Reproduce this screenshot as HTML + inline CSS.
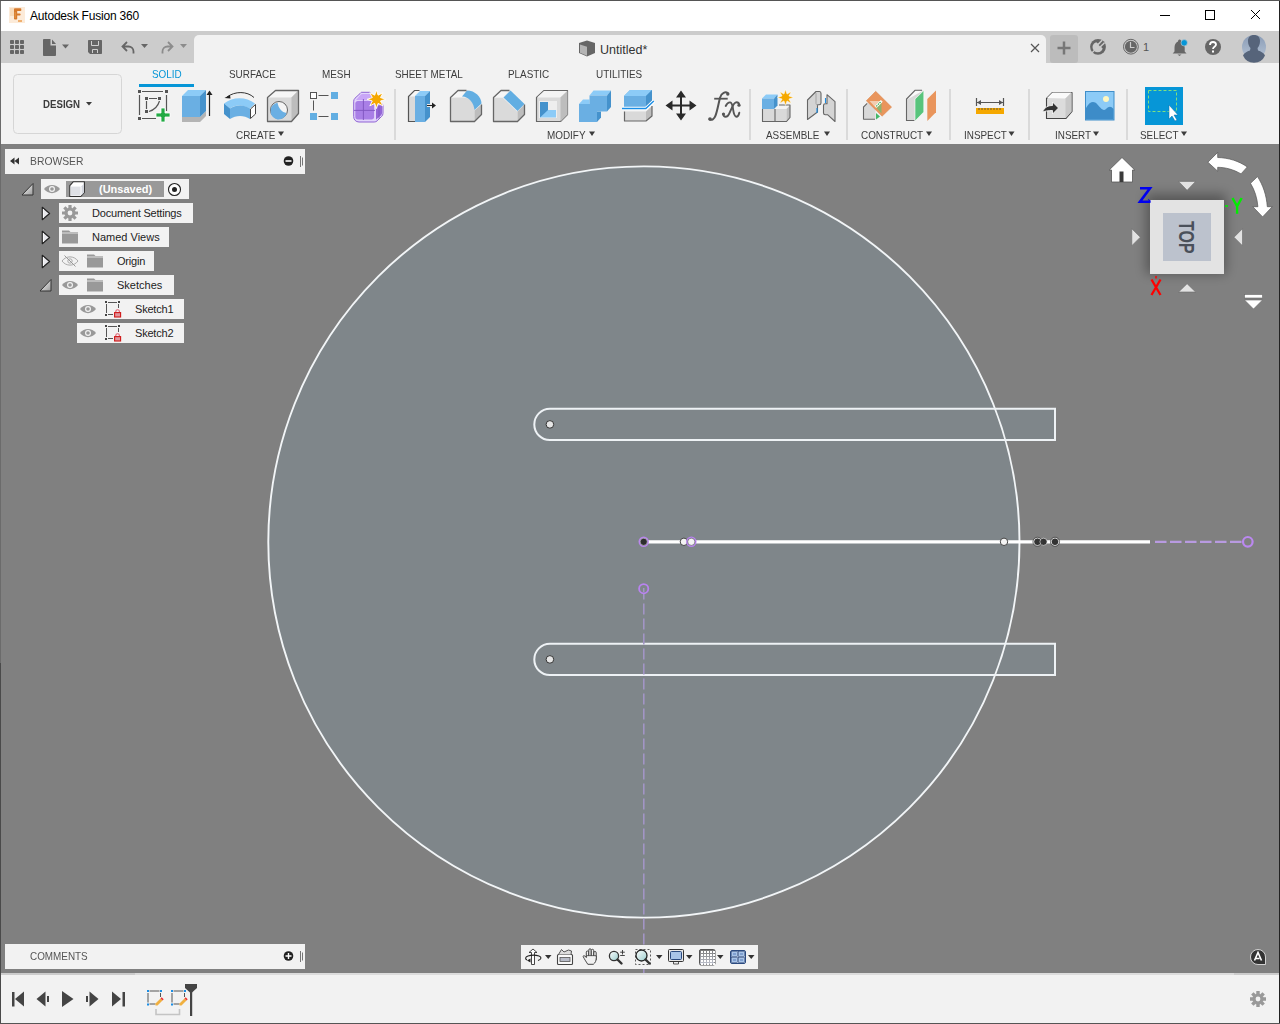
<!DOCTYPE html>
<html><head><meta charset="utf-8">
<style>
*{margin:0;padding:0;box-sizing:border-box}
html,body{width:1280px;height:1024px;overflow:hidden;background:#808080;font-family:"Liberation Sans",sans-serif}
.a{position:absolute;white-space:nowrap}
#title{left:0;top:0;width:1280px;height:31px;background:#fff}
#qat{left:0;top:31px;width:1280px;height:32px;background:#cccccc}
#doctab{left:194px;top:35px;width:852px;height:28px;background:#f2f2f2;border-radius:5px 5px 0 0}
#ribbon{left:0;top:63px;width:1280px;height:81px;background:#f2f2f2}
#vp{left:1px;top:144px;width:1278px;height:829px;background:#808080}
#tl{left:0;top:973px;width:1280px;height:51px;background:#f2f2f2;border-top:2px solid #dcdcdc}
.t{font-size:11px;color:#3c3c3c;transform-origin:0 0;transform:scaleX(.9)}
svg{position:absolute;left:0;top:0}
</style></head><body>
<div class="a" id="title"></div>
<div class="a" id="qat"></div>
<div class="a" id="doctab"></div>
<div class="a" id="ribbon"></div>
<div class="a" id="vp"></div>
<div class="a" id="tl"></div>
<div class="a" style="left:0;top:973px;width:135px;height:2px;background:#cccccc"></div>
<div class="a" style="left:1234px;top:973px;width:46px;height:2px;background:#cccccc"></div>

<!-- TEXT -->
<div class="a" style="left:30px;top:9px;font-size:12px;color:#000;letter-spacing:-0.2px">Autodesk Fusion 360</div>
<div class="a" style="left:600px;top:43px;font-size:12.5px;color:#333">Untitled*</div>
<div class="a" style="left:1143px;top:41px;font-size:11px;color:#555">1</div>

<div class="a t" style="left:152px;top:68px;color:#0696d7">SOLID</div>
<div class="a t" style="left:229px;top:68px">SURFACE</div>
<div class="a t" style="left:322px;top:68px">MESH</div>
<div class="a t" style="left:395px;top:68px">SHEET METAL</div>
<div class="a t" style="left:508px;top:68px">PLASTIC</div>
<div class="a t" style="left:596px;top:68px">UTILITIES</div>

<div class="a" style="left:43px;top:98px;font-size:11px;font-weight:bold;color:#3c3c3c;transform-origin:0 0;transform:scaleX(.88)">DESIGN</div>

<div class="a t" style="left:236px;top:129px">CREATE</div>
<div class="a t" style="left:547px;top:129px">MODIFY</div>
<div class="a t" style="left:766px;top:129px">ASSEMBLE</div>
<div class="a t" style="left:861px;top:129px">CONSTRUCT</div>
<div class="a t" style="left:964px;top:129px">INSPECT</div>
<div class="a t" style="left:1055px;top:129px">INSERT</div>
<div class="a t" style="left:1140px;top:129px">SELECT</div>

<svg width="1280" height="144" viewBox="0 0 1280 144">
 <!-- app icon -->
 <rect x="9" y="7" width="16" height="16" fill="#fcebd9"/>
 <rect x="10" y="8" width="4" height="8" fill="#f8dcbc"/>
 <path d="M14 9c0-.5.3-.8.8-.8h5.7c.5 0 .8.4.8.9v1.2c0 .5-.3.8-.8.8h-3.3v2.3h2.6c.5 0 .8.3.8.8v.6c0 .5-.3.8-.8.8h-2.6v3.2c0 .5-.4.8-.9.8h-1.4c-.5 0-.9-.3-.9-.8z" fill="#d67a2c"/>
 <path d="M15.2 12v6" stroke="#f0b060" stroke-width=".8" opacity=".7"/>
 <rect x="18" y="20" width="4" height="2" fill="#f0b070"/>
 <!-- window controls -->
 <path d="M1160 15.5h10" stroke="#000" stroke-width="1"/>
 <rect x="1205.5" y="10.5" width="9" height="9" fill="none" stroke="#000"/>
 <path d="M1251 10l9 9M1260 10l-9 9" stroke="#000" stroke-width="1"/>
 <!-- QAT -->
 <g fill="#666">
  <rect x="10" y="40" width="4" height="4" rx=".8"/><rect x="15" y="40" width="4" height="4" rx=".8"/><rect x="20" y="40" width="4" height="4" rx=".8"/>
  <rect x="10" y="45" width="4" height="4" rx=".8"/><rect x="15" y="45" width="4" height="4" rx=".8"/><rect x="20" y="45" width="4" height="4" rx=".8"/>
  <rect x="10" y="50" width="4" height="4" rx=".8"/><rect x="15" y="50" width="4" height="4" rx=".8"/><rect x="20" y="50" width="4" height="4" rx=".8"/>
  <path d="M43 40c0-.5.4-1 1-1h6.5v6.5h5.5v9.5c0 .5-.4 1-1 1h-11c-.6 0-1-.5-1-1z"/><path d="M52 39.5l4 4.5h-4z"/>
  <path d="M62 44.5h7l-3.5 4z"/>
  <path d="M89 40h12c.6 0 1 .4 1 1v12c0 .6-.4 1-1 1h-11l-2-2v-11c0-.6.4-1 1-1z"/>
  <path d="M141 44h7l-3.5 4z"/>
 </g>
 <path d="M91.5 41v4.5h7v-4.5M92.5 53v-3.5h5v3.5" stroke="#d0d0d0" stroke-width="1" fill="none"/>
 <path d="M127 42l-4.5 4.5 4.5 4.5M122.5 46.5h6a5 5 0 0 1 5 5v2" stroke="#666" stroke-width="1.8" fill="none"/>
 <path d="M168 42l4.5 4.5-4.5 4.5M172.5 46.5h-5a5 5 0 0 0-5 5v2" stroke="#8c8c8c" stroke-width="1.8" fill="none"/>
 <path d="M180 44h7l-3.5 4z" fill="#8c8c8c"/>
 <!-- doc tab icon -->
 <path d="M579 43l8-2.5 8 2.5v10l-8 3.5-8-3.5z" fill="#666"/>
 <path d="M580 44.5l7 2.2v9l-7-3z" fill="#b4b4b4"/>
 <path d="M1031 44l8 8M1039 44l-8 8" stroke="#555" stroke-width="1.2"/>
 <!-- right tab bar -->
 <rect x="1050" y="35" width="28" height="28" rx="3" fill="#bcbcbc"/>
 <path d="M1064 41.5v13M1057.5 48h13" stroke="#777" stroke-width="2.5"/>
</svg>


<svg width="1280" height="144" viewBox="0 0 1280 144">
 <!-- design box -->
 <rect x="13.5" y="74.5" width="108" height="59" rx="4" fill="none" stroke="#d6d6d6"/>
 <path d="M86 102h6l-3 3.5z" fill="#3c3c3c"/>
 <!-- solid underline -->
 <rect x="139" y="84" width="55" height="3" fill="#0696d7"/>
 <!-- dropdown arrows for group labels -->
 <g fill="#3c3c3c">
  <path d="M278 131.6h6l-3 4.4z"/>
  <path d="M589 131.6h6l-3 4.4z"/>
  <path d="M824 131.6h6l-3 4.4z"/>
  <path d="M926 131.6h6l-3 4.4z"/>
  <path d="M1008.5 131.6h6l-3 4.4z"/>
  <path d="M1093 131.6h6l-3 4.4z"/>
  <path d="M1181 131.6h6l-3 4.4z"/>
 </g>
 <!-- separators -->
 <g fill="#dadada">
  <rect x="394" y="89" width="2" height="51"/>
  <rect x="749" y="89" width="2" height="51"/>
  <rect x="846" y="89" width="2" height="51"/>
  <rect x="949" y="89" width="2" height="51"/>
  <rect x="1028" y="89" width="2" height="51"/>
  <rect x="1126" y="89" width="2" height="51"/>
 </g>

 <!-- CREATE: sketch -->
 <g stroke="#555" stroke-width="1.2" fill="none">
  <path d="M142 91.5h21M166.5 95v16M139.5 95v20M142 118.5h14"/>
  <path d="M149 98.5h8M146.5 101v8M149 111.5c5-1.5 9-5.5 10.5-10.5"/>
 </g>
 <g fill="#555">
  <rect x="138" y="90" width="3" height="3"/><rect x="165" y="90" width="3" height="3"/><rect x="138" y="117" width="3" height="3"/>
  <rect x="145" y="97" width="3" height="3"/><rect x="158" y="97" width="3" height="3"/><rect x="145" y="110" width="3" height="3"/>
 </g>
 <path d="M161 108h4v5h5v4h-5v5h-4v-5h-5v-4h5z" fill="#22aa44" stroke="#fff" stroke-width=".8"/>
 <!-- extrude -->
 <path d="M182 117h18l6-6v5l-6 6h-18z" fill="#b4b4b4"/>
 <path d="M182 96l6-6h18l-6 6z" fill="#8ccbf7"/>
 <rect x="182" y="96" width="18" height="21" fill="#6aafe3"/>
 <path d="M200 96l6-6v21l-6 6z" fill="#4592cc"/>
 <path d="M209.5 116v-22" stroke="#222" stroke-width="1.2"/><path d="M206.5 95l3-4.5 3 4.5z" fill="#222"/>
 <!-- revolve -->
 <path d="M227 97c8-6 20-6 27 0.5" stroke="#333" stroke-width="1" fill="none"/>
 <path d="M224.5 98l5.5-3 .5 3.5z" fill="#222"/>
 <path d="M224 103.5c9-7 22-7 31 0l-5 5c-7-4-15-4-20 0l-6-5z" fill="#8ccbf7"/>
 <path d="M230 108.5c6-4 14-4 20 0v10.5c-6-4-14-4-20 0z" fill="#6aafe3"/>
 <path d="M224 103.5l6 5v10.5l-6-5z" fill="#4592cc"/>
 <path d="M250.5 109l5-4.5v9.5l-5 4.5z" fill="#fff" stroke="#444" stroke-width="1"/>
 <!-- hole -->
 <path d="M267.5 97.5l8-7h23v23l-7 8h-24z" fill="#d9d9d9"/>
 <path d="M268 97.5l7.5-7h22.5l-6.5 7z" fill="#f6f6f6"/>
 <path d="M291.5 97.5l7-7v23l-7 8z" fill="#bdbdbd"/>
 <path d="M267.5 121.5v-24l8-7h23v23l-7 8z" fill="none" stroke="#666" stroke-width="1.3" stroke-linejoin="round"/>
 <circle cx="279" cy="110" r="8.5" fill="#f4f4f4" stroke="#666" stroke-width="1"/>
 <path d="M277.5 102.8c-4 1-6.8 4-6.8 7.7a8 8 0 0 0 15.8 2.5c-4.5-.5-8-4.5-9-10.2z" fill="#6aafe3"/>
 <!-- pattern -->
 <rect x="310.5" y="92.5" width="6" height="6" fill="#fff" stroke="#555"/>
 <rect x="331" y="92" width="7" height="7" fill="#62aee2"/>
 <rect x="310" y="113" width="7" height="7" fill="#62aee2"/>
 <rect x="331" y="113" width="7" height="7" fill="#62aee2"/>
 <path d="M318.5 95.5h10M313.5 100.5v10M318.5 116.5h10" stroke="#555" stroke-width="1"/>
 <!-- form -->
 <path d="M361.5 92.3h8.5l2.5 3 10.5 9.5v8.5c0 1.2-.5 2.2-1.3 3l-4.5 4.5c-.8.8-1.8 1.2-3 1.2h-15.2c-3 0-5.3-2.3-5.3-5.3v-15.5c0-1.2.5-2.2 1.3-3l5.2-4.8c.4-.4.8-1 1.3-1.1z" fill="#e2d4fb" stroke="#8f63d4" stroke-width="1"/>
 <path d="M356 100l4.8-5.5c.4-.4.9-.6 1.4-.6h8l3 5.5v1z" fill="#c9a6f7"/>
 <path d="M355.3 103.5c0-1.5 1.2-2.5 2.5-2.5h13.8c1.5 0 2.5 1 2.5 2.5v13.5c0 1.5-1 2.5-2.5 2.5h-13.8c-1.5 0-2.5-1-2.5-2.5z" fill="#a97fe6"/>
 <path d="M376 106l6-1v8c0 1-.4 1.6-1 2.2l-5 4.5z" fill="#9466d6"/>
 <path d="M363.4 99v21M354 110.4h21M379 104.5v14" stroke="#7e56c0" stroke-width=".9"/>
 <path d="M376.4 90l1.7 5.2 4.9-2.5-2.5 4.9 5.2 1.7-5.2 1.7 2.5 4.9-4.9-2.5-1.7 5.2-1.7-5.2-4.9 2.5 2.5-4.9-5.2-1.7 5.2-1.7-2.5-4.9 4.9 2.5z" fill="#f5a800" stroke="#fff" stroke-width=".9" stroke-linejoin="round"/>

 <!-- MODIFY: press pull -->
 <path d="M409 96.5l5.5-6h6l-5.5 6z" fill="#f6f6f6"/><path d="M409 96.5h6v25h-6z" fill="#dadada"/><path d="M415 121.5h-6.5v-25l6-6h5" fill="none" stroke="#555" stroke-width="1.2"/>
 <path d="M415 96l5-5h10l-5 5z" fill="#8ccbf7"/>
 <rect x="415" y="96" width="10" height="26" fill="#6aafe3"/>
 <path d="M425 96l5-5v26l-5 5z" fill="#4592cc"/>
 <path d="M427 105.5h7" stroke="#fff" stroke-width="3"/>
 <path d="M427 105.5h6" stroke="#222" stroke-width="1.2"/><path d="M432 102.5l4 3-4 3z" fill="#222"/>
 <!-- fillet -->
 <path d="M451 97.5h12c7 0 11.5 5 11.5 12v12h-24z" fill="#dadada"/>
 <path d="M451 97.5l7-7h8.5l-4.5 6.5z" fill="#f6f6f6"/>
 <path d="M474.5 121.5l7-7v-10l-7 6z" fill="#bdbdbd"/>
 <path d="M462 96.5l5-6c8 0 14.5 6.5 14.5 13l-7 6.5c-.5-7-5.5-13.5-12.5-13.5z" fill="#62aee2"/>
 <path d="M466.5 90.5h-8.5l-7.5 7v24h24l7-7v-10" fill="none" stroke="#666" stroke-width="1.3" stroke-linejoin="round"/>
 <!-- chamfer -->
 <path d="M494 97.5h8.5l15 14.5v9.5h-24z" fill="#dadada"/>
 <path d="M494 97.5l7-7h7.5l-6 7z" fill="#f6f6f6"/>
 <path d="M517.5 121.5l7-7v-10l-7 7z" fill="#bdbdbd"/>
 <path d="M503.5 97.5l7-7 14 13.5-7 7z" fill="#62aee2"/>
 <path d="M509.5 90.5h-8.5l-7.5 7v24h24l7-7v-10" fill="none" stroke="#666" stroke-width="1.3" stroke-linejoin="round"/>
 <!-- shell -->
 <path d="M536.5 121.5v-24l7.5-7h23.5v24l-7 7z" fill="#dadada" stroke="#666" stroke-width="1.2" stroke-linejoin="round"/>
 <path d="M537 97.5l7-6.5h23l-7 6.5z" fill="#f4f4f4"/>
 <path d="M560.5 97.5l7-6.5v23.5l-7 7z" fill="#bdbdbd"/>
 <rect x="539" y="101" width="18" height="17" fill="#eeeeee"/>
 <path d="M540 102h8v8h8v7.5h-16z" fill="#8ccbf7"/>
 <path d="M540 102h8v8l-8 7.5z" fill="#4592cc"/>
 <!-- combine -->
 <path d="M579 104l4-4.5h6.5v4.5z" fill="#8ccbf7"/>
 <rect x="579" y="104" width="18" height="18" fill="#6aafe3"/>
 <path d="M597 111.5h4v6l-4 4.5z" fill="#4592cc"/>
 <path d="M589.5 95.5l4-5h17.5l-4 5z" fill="#8ccbf7"/>
 <rect x="589.5" y="95.5" width="17.5" height="16" fill="#6aafe3"/>
 <path d="M607 95.5l4-5v16.5l-4 4.5z" fill="#4592cc"/>
 <!-- split -->
 <path d="M624 96l6-6h22v14l-6 6h-22z" fill="#6aafe3"/>
 <path d="M624 96l6-6h22l-6 6z" fill="#8ccbf7"/><path d="M646 96l6-6v14l-6 6z" fill="#4592cc"/>
 <path d="M622 108.5h24l8-7.5" stroke="#fff" stroke-width="3.5" fill="none"/>
 <path d="M622 108.5h23.8l8-7.5" stroke="#1a8ee6" stroke-width="1.4" fill="none"/>
 <path d="M624.5 111.5h21.5v9.5h-21.5z" fill="#d9d9d9"/>
 <path d="M646 111.5l6-5.5v10l-6 5z" fill="#bdbdbd"/>
 <path d="M624.5 111.5v9.5h21.5l6-5v-10" fill="none" stroke="#666" stroke-width="1.2" stroke-linejoin="round"/>
 <!-- move -->
 <path d="M681 95v21M671 105.5h21" stroke="#2a2a2a" stroke-width="2"/>
 <path d="M681 90.5l5 7h-10zM681 120.5l5-7h-10zM665.5 105.5l7-5v10zM696.5 105.5l-7-5v10z" fill="#2a2a2a"/>
 <!-- fx -->
 <g fill="none" stroke="#555" stroke-linecap="round">
  <path d="M728 93.2c-2.5-1.8-6.5-.8-8 4.5-1.5 6-2.5 12.5-4.5 18-1.3 3.5-3.8 4.8-6 3.6" stroke-width="2"/>
  <path d="M714.2 98.7h13.5" stroke-width="1.8" stroke-linecap="butt"/>
  <path d="M725.7 106c1.3-2.5 3-3.8 4.5-3.6 2 .3 2.3 3 2.8 6.5.6 4 1.2 7.8 3.3 7.8 1.5 0 2.5-1.5 3-4" stroke-width="1.9"/>
  <path d="M739.2 104.8c-.3-1.7-1.3-2.5-2.6-2.5-2 0-3.5 2.5-5 6l-2.5 5.5c-1 2.2-2.4 3-3.5 3-1.3 0-2.2-1-2.3-2.5" stroke-width="1.9"/>
 </g>
 <circle cx="727.8" cy="94" r="1.7" fill="#555"/><circle cx="710" cy="119" r="1.8" fill="#555"/>
 <circle cx="739" cy="105.2" r="1.6" fill="#555"/><circle cx="723.5" cy="114" r="1.6" fill="#555"/>

 <!-- ASSEMBLE: new component -->
 <path d="M775 109l4-4h11l-4 4z" fill="#f4f4f4"/>
 <rect x="762.5" y="109" width="24" height="12.5" fill="#d9d9d9"/>
 <path d="M786.5 109l3.5-4v12.5l-3.5 4z" fill="#c0c0c0"/>
 <path d="M762.5 109v12.5h24l3.5-4v-12.5h-11M775 109v12.5" fill="none" stroke="#666" stroke-width="1.1" stroke-linejoin="round"/>
 <path d="M762 98.5l4-4h11.5l-3.5 4z" fill="#8ccbf7"/>
 <rect x="762" y="98.5" width="12" height="10.5" fill="#6aafe3"/>
 <path d="M774 98.5l3.5-4v11l-3.5 3.5z" fill="#4592cc"/>
 <path d="M785.5 89.5l1.5 4.6 4.2-2.3-2.3 4.2 4.6 1.5-4.6 1.5 2.3 4.2-4.2-2.3-1.5 4.6-1.5-4.6-4.2 2.3 2.3-4.2-4.6-1.5 4.6-1.5-2.3-4.2 4.2 2.3z" fill="#f5a800" stroke="#fff" stroke-width=".5"/>
 <!-- joint -->
 <path d="M807.5 119.5v-19.5l8.5-8.5h3.5c1 0 1.5 1 1.5 2v9.5c0 1-.8 1.7-1.8 1.7h-1.7v7.3z" fill="#d4d4d4" stroke="#666" stroke-width="1.1" stroke-linejoin="round"/>
 <path d="M816 93v10.5c0 1 .8 1.5 1.7 1.5" stroke="#999" stroke-width=".8" fill="none"/>
 <path d="M823.5 113v-7.5c0-1 .8-1.8 1.8-1.8h1.7v-9l8 7v19.8l-7.5-6.8h-2.2c-1 0-1.8-.8-1.8-1.7z" fill="#d4d4d4" stroke="#666" stroke-width="1.1" stroke-linejoin="round"/>
 <path d="M817 108v5M825.5 98v5" stroke="#1a8ee6" stroke-width="1.1"/>

 <!-- CONSTRUCT: offset plane -->
 <path d="M864 107l3.5-3.5h8v15.5h-11.5z" fill="#d9d9d9"/>
 <path d="M863.5 119.5v-12.5l3.7-3.7M863.5 119.3h11.5" fill="none" stroke="#666" stroke-width="1.1"/>
 <path d="M876 119.5v-6.5l4 3.5z" fill="#44b86a"/>
 <path d="M866.3 100.8l9.4-9.5 15.9 15.8-9.5 9.1z" fill="#e9955c" stroke="#d8844a" stroke-width=".5"/>
 <path d="M869.5 101h11.5l-5 7z" fill="#f2cdb2"/>
 <path d="M876.5 108l5-5v10.5z" fill="#8db46e"/>
 <path d="M875.8 106.8l6-6" stroke="#fff" stroke-width="2.6"/><path d="M876.3 106.3l5-5" stroke="#22aa44" stroke-width="1.2" stroke-dasharray="1.4 .9"/>
 <!-- plane at angle -->
 <path d="M907 99l8-8.5h8v21.5l-8 9h-8z" fill="#d9d9d9"/>
 <path d="M907.3 99.5l8-8.5h7" fill="#fafafa"/>
 <path d="M914.5 120.5h-8v-21.5l8.5-8.7h7" fill="none" stroke="#666" stroke-width="1.1"/>
 <path d="M915 99l8.8-8.5v21.5l-8.8 9z" fill="#58c47c" stroke="#fff" stroke-width=".6"/>
 <path d="M927.3 99l8.7-8.5v21.8l-8.7 8.7z" fill="#e9955c"/>

 <!-- INSPECT -->
 <path d="M977 102.5h26" stroke="#555" stroke-width="1"/>
 <path d="M976.5 98v8M1003.5 98v8" stroke="#555" stroke-width="1.2"/>
 <path d="M977 102.5l4-2.5v5zM1003 102.5l-4-2.5v5z" fill="#555"/>
 <rect x="976" y="108" width="28" height="6" fill="#f5a800"/>
 <path d="M979 108v2M982 108v2M985 108v2M988 108v2M991 108v2M994 108v2M997 108v2M1000 108v2" stroke="#444" stroke-width=".8"/>

 <!-- INSERT: derive -->
 <path d="M1046.5 118.5v-20l6-6h19.5v19l-6 7z" fill="#dcdcdc" stroke="#444" stroke-width="1.1" stroke-linejoin="round"/>
 <path d="M1047 98l5.5-5.5h19l-6 6z" fill="#fafafa"/>
 <path d="M1065.5 98.5l6-6v19l-6 6.5z" fill="#c8c8c8"/>
 <path d="M1042.5 112c2-5 6-6.5 10-6.5v-3.5l6 6-6 6v-3.5c-4 0-7.5 .5-10 1.5z" fill="#333" stroke="#fff" stroke-width=".8"/>
 <!-- insert image -->
 <rect x="1085.5" y="91.5" width="28.5" height="28.5" fill="#8ccbf7" stroke="#3f8ec9" stroke-width="1"/>
 <path d="M1086 108c4-7 8-7 11-4s6 8 9 5 5-3 7.5 0v10.5h-27.5z" fill="#3d8cc8"/>
 <circle cx="1106" cy="99" r="3" fill="#fff7c0"/>

 <!-- SELECT -->
 <rect x="1145" y="87" width="38" height="38" fill="#0696d7"/>
 <rect x="1148.5" y="90.5" width="28" height="21" fill="none" stroke="#7fe07f" stroke-width="1" stroke-dasharray="3 2"/>
 <path d="M1169 105v14l3-3 3 5 2-1-3-5h4z" fill="#fff" stroke="#0b6fa8" stroke-width=".5"/>
</svg>


<!-- VIEWPORT SVG -->
<svg width="1280" height="1024" viewBox="0 0 1280 1024" style="top:0;left:0">
 <defs>
  <clipPath id="vpc"><rect x="1" y="144" width="1278" height="829"/></clipPath>
  <filter id="blur6" x="-50%" y="-50%" width="200%" height="200%"><feGaussianBlur stdDeviation="6"/></filter>
 </defs>
 <g clip-path="url(#vpc)">
  <circle cx="643.9" cy="542" r="375.6" fill="#7f868a"/>
  <path d="M549.9 408.8H1055V440H549.9A15.6 15.6 0 0 1 549.9 408.8Z" fill="#7f868a"/>
  <path d="M549.9 643.8H1055V675H549.9A15.6 15.6 0 0 1 549.9 643.8Z" fill="#7f868a"/>
  <circle cx="643.9" cy="542" r="375.6" fill="none" stroke="#f2f5f7" stroke-width="1.9"/>
  <path d="M549.9 408.8H1055V440H549.9A15.6 15.6 0 0 1 549.9 408.8Z" fill="none" stroke="#eef2f5" stroke-width="2"/>
  <path d="M549.9 643.8H1055V675H549.9A15.6 15.6 0 0 1 549.9 643.8Z" fill="none" stroke="#eef2f5" stroke-width="2"/>
  <circle cx="549.9" cy="424.4" r="3.8" fill="#e6e6e6" stroke="#333" stroke-width="1"/>
  <circle cx="549.9" cy="659.4" r="3.8" fill="#e6e6e6" stroke="#333" stroke-width="1"/>
  <!-- vertical dashed -->
  <path d="M643.8 593V973" stroke="#a596c8" stroke-width="1.5" stroke-dasharray="11 4" stroke-dashoffset="-10.5"/>
  <!-- horizontal line -->
  <path d="M643.7 541.8H1150" stroke="#fff" stroke-width="3.2"/>
  <path d="M1155 541.8H1242" stroke="#b89ae0" stroke-width="2.2" stroke-dasharray="11.5 3.5"/>
  <circle cx="1247.8" cy="541.8" r="4.8" fill="none" stroke="#bb88f0" stroke-width="2.2"/>
  <!-- points -->
  <circle cx="643.7" cy="541.8" r="5.2" fill="#b983f0"/>
  <circle cx="643.7" cy="541.8" r="3.6" fill="#2e2e2e" stroke="#bbb" stroke-width=".7"/>
  <circle cx="683.9" cy="541.8" r="3.7" fill="#f4f4f4" stroke="#444" stroke-width="1"/>
  <circle cx="691.3" cy="541.8" r="5.2" fill="#b983f0"/>
  <circle cx="691.3" cy="541.8" r="3.6" fill="#f4f4f4" stroke="#555" stroke-width=".6"/>
  <circle cx="643.7" cy="588.7" r="4.6" fill="none" stroke="#b983f0" stroke-width="1.8"/>
  <path d="M643.7 588v4" stroke="#a596c8" stroke-width="1.5"/>
  <circle cx="1004" cy="541.8" r="3.7" fill="#f4f4f4" stroke="#444" stroke-width="1"/>
  <circle cx="1037.5" cy="541.8" r="3.8" fill="#333" stroke="#f4f4f4" stroke-width=".8"/>
  <circle cx="1043.5" cy="541.8" r="3.6" fill="#333" stroke="#eee" stroke-width=".6"/>
  <circle cx="1055" cy="541.8" r="3.8" fill="#333" stroke="#f4f4f4" stroke-width=".8"/>
  <circle cx="1037.5" cy="541.8" r="4.6" fill="none" stroke="#444" stroke-width=".7"/>
  <circle cx="1055" cy="541.8" r="4.6" fill="none" stroke="#444" stroke-width=".7"/>
 </g>

 <!-- NAV CUBE -->
 <rect x="1146" y="194" width="80" height="80" fill="#000" opacity=".32" filter="url(#blur6)"/>
 <rect x="1150" y="200" width="74" height="74" fill="#e3e3e3"/>
 <rect x="1163" y="213" width="48" height="48" fill="#bcc2cd"/>
 <text x="0" y="0" transform="translate(1179.3 237.3) rotate(90) scale(0.76 1.05)" text-anchor="middle" font-family="Liberation Sans" font-weight="bold" font-size="21" fill="#4a505a">TOP</text>
 <!-- axes -->
 <path d="M1140 188.2h10l-10 13.6h10.5" fill="none" stroke="#0000f0" stroke-width="2.6" stroke-linejoin="miter"/>
 <path d="M1148 199.5l2.5 1.5" stroke="#0000f0" stroke-width="1"/>
 <path d="M1232.5 198l4.6 8.3 4.6-8.3M1237.1 206.3v7.5" fill="none" stroke="#00ee00" stroke-width="2.4"/>
 <path d="M1225 206h3" stroke="#00ee00" stroke-width="1.6"/>
 <path d="M1151.5 279.5l9 15.5M1160.5 279.5l-9 15.5" fill="none" stroke="#ff0000" stroke-width="2.3"/>
 <path d="M1156 276v2.5" stroke="#f00" stroke-width="1.5"/>
 <!-- arrows around cube -->
 <g fill="#e2e2e2" stroke="#6a6a6a" stroke-width=".6">
  <path d="M1178.6 181.4h17l-8.5 8.9z"/>
  <path d="M1178.6 292h17l-8.5-8.3z"/>
  <path d="M1131.8 228.7v17l8.5-8.5z"/>
  <path d="M1242.5 228.7v17l-8.5-8.5z"/>
 </g>
 <!-- home -->
 <path d="M1122 157.5l-12.8 12.5h2.3v12h21v-12h2.3z" fill="#fff" stroke="#555" stroke-width=".8" stroke-linejoin="round"/>
 <rect x="1119.5" y="171.5" width="4" height="10.5" fill="#3a3a3a"/>
 <!-- rotate arrows -->
 <path d="M1207.9 162.2l9.8-9.8v5.1c11 .3 21 3.5 29.6 9.4l-6.3 7c-7.2-4.2-15-6.5-23.3-6.6v3.9z" fill="#fff" stroke="#555" stroke-width=".7" stroke-linejoin="round"/>
 <path d="M1250.5 183.3l7-6.7c5.5 8.5 9 18.5 9.8 30.1h5l-9.7 10.2-9.8-10.2h5.1c-.7-8.7-3.2-16.5-7.4-23.4z" fill="#fff" stroke="#555" stroke-width=".7" stroke-linejoin="round"/>
 <!-- view menu icon -->
 <rect x="1244.5" y="294.5" width="18" height="3.5" fill="#fff" stroke="#666" stroke-width=".6"/>
 <path d="M1244.5 300h18l-9 9z" fill="#fff" stroke="#666" stroke-width=".6"/>
</svg>


<!-- BROWSER PANEL -->
<div class="a" style="left:5px;top:149px;width:300px;height:25px;background:#f2f2f2"></div>
<div class="a t" style="left:30px;top:155px;color:#555;font-size:11.5px">BROWSER</div>
<div class="a" style="left:41px;top:179px;width:148px;height:20px;background:#f2f2f2"></div>
<div class="a" style="left:66px;top:181px;width:98px;height:16px;background:#999"></div>
<div class="a" style="left:99px;top:183px;font-size:11px;font-weight:bold;color:#fff">(Unsaved)</div>
<div class="a" style="left:59px;top:203px;width:134px;height:20px;background:#f2f2f2"></div>
<div class="a" style="left:92px;top:207px;font-size:11px;color:#222;letter-spacing:-0.2px">Document Settings</div>
<div class="a" style="left:59px;top:227px;width:110px;height:20px;background:#f2f2f2"></div>
<div class="a" style="left:92px;top:231px;font-size:11px;color:#222">Named Views</div>
<div class="a" style="left:59px;top:251px;width:95px;height:20px;background:#f2f2f2"></div>
<div class="a" style="left:117px;top:255px;font-size:11px;color:#222;letter-spacing:-0.2px">Origin</div>
<div class="a" style="left:59px;top:275px;width:115px;height:20px;background:#f2f2f2"></div>
<div class="a" style="left:117px;top:279px;font-size:11px;color:#222">Sketches</div>
<div class="a" style="left:77px;top:299px;width:107px;height:20px;background:#f2f2f2"></div>
<div class="a" style="left:135px;top:303px;font-size:11px;color:#222;letter-spacing:-0.2px">Sketch1</div>
<div class="a" style="left:77px;top:323px;width:107px;height:20px;background:#f2f2f2"></div>
<div class="a" style="left:135px;top:327px;font-size:11px;color:#222;letter-spacing:-0.2px">Sketch2</div>

<!-- COMMENTS PANEL -->
<div class="a" style="left:5px;top:944px;width:300px;height:25px;background:#f2f2f2"></div>
<div class="a t" style="left:30px;top:950px;color:#555;font-size:11.5px;transform:scaleX(.86)">COMMENTS</div>

<svg width="320" height="1024" viewBox="0 0 320 1024">
 <defs>
  <linearGradient id="trg" x1="0" y1="0" x2="1" y2="1"><stop offset="0" stop-color="#fff"/><stop offset="1" stop-color="#999"/></linearGradient>
  <g id="eye"><path d="M0 0c4-5.5 12-5.5 16 0-4 5.5-12 5.5-16 0z" fill="#999"/><circle cx="8" cy="0" r="3" fill="#f2f2f2"/><circle cx="8" cy="0" r="1.8" fill="#999"/></g>
  <g id="fold"><path d="M0 0h7l1.5 1.5h7.5v11.5h-16z" fill="#999"/><path d="M0 2.5h16" stroke="#f2f2f2" stroke-width=".8"/></g>
  <g id="trR"><path d="M2.3 1.3l7.3 6.2-7.3 6.2z" fill="#e8e8ec" stroke="#222" stroke-width="1.2" stroke-linejoin="round"/><path d="M3.4 3v9" stroke="#fff" stroke-width=".8"/></g>
  <g id="trD"><path d="M11 .5v11.5h-11z" fill="url(#trg)" stroke="#333" stroke-width="1" stroke-linejoin="round"/></g>
  <g id="sk"><rect x="0" y="0" width="2" height="2" fill="#444"/><rect x="13" y="0" width="2" height="2" fill="#444"/><rect x="0" y="13" width="2" height="2" fill="#444"/>
   <path d="M3 1.5h9M1.5 3v9M13.5 3v4M3 13.5h5" stroke="#555" stroke-width="1" fill="none"/>
   <path d="M10.8 11.3v-.8a1.8 1.8 0 0 1 3.6 0v.8" stroke="#e06070" stroke-width="1.1" fill="none"/>
   <rect x="9.6" y="11.6" width="6" height="4.4" fill="#e0959c" stroke="#d01818" stroke-width="1.1"/></g>
 </defs>
 <!-- header icons -->
 <path d="M10 161l4.5-3.5v7zM14.5 161l4.5-3.5v7z" fill="#333"/>
 <circle cx="288.5" cy="161" r="4.8" fill="#222"/><path d="M285.5 161h6" stroke="#fff" stroke-width="1.6"/>
 <path d="M300.5 156v11M302.5 157.5v8" stroke="#555" stroke-width=".8"/>
 <circle cx="288.5" cy="956" r="4.8" fill="#222"/><path d="M285.5 956h6M288.5 953v6" stroke="#fff" stroke-width="1.4"/>
 <path d="M300.5 951v11M302.5 952.5v8" stroke="#555" stroke-width=".8"/>
 <!-- root -->
 <use href="#trD" x="22" y="183"/>
 <use href="#eye" x="44" y="189"/>
 <path d="M69.8 185.7l3.6-4h11v10.8l-3.6 4h-11z" fill="#fff" stroke="#333" stroke-width="1.1" stroke-linejoin="round"/>
 <rect x="70.6" y="186.6" width="10" height="9" fill="#dfe1e6"/>
 <path d="M81.6 186.3l2.3-2.7v9l-2.3 2.7z" fill="#d2d5dd"/>
 <circle cx="174.5" cy="189.5" r="6" fill="#fff" stroke="#222" stroke-width="1.1"/><circle cx="174.5" cy="189.5" r="2.5" fill="#222"/>
 <!-- doc settings -->
 <use href="#trR" x="40" y="206"/>
 <g transform="translate(70 213)" fill="#999">
  <circle r="5.6"/>
  <path d="M-1.6 -8h3.2v3h-3.2zM-1.6 5h3.2v3h-3.2zM-8 -1.6h3v3.2h-3zM5 -1.6h3v3.2h-3z"/>
  <path d="M-1.6 -8h3.2v3h-3.2zM-1.6 5h3.2v3h-3.2zM-8 -1.6h3v3.2h-3zM5 -1.6h3v3.2h-3z" transform="rotate(45)"/>
  <circle r="2.4" fill="#f2f2f2"/>
 </g>
 <!-- named views -->
 <use href="#trR" x="40" y="230"/>
 <use href="#fold" x="62" y="230.5"/>
 <!-- origin -->
 <use href="#trR" x="40" y="254"/>
 <g transform="translate(62 261)"><path d="M0 0c4-5.5 12-5.5 16 0-4 5.5-12 5.5-16 0z" fill="none" stroke="#aaa" stroke-width="1"/><circle cx="8" cy="0" r="2.2" fill="none" stroke="#aaa" stroke-width="1"/><path d="M2.5 -5.5l11 11" stroke="#999" stroke-width="1"/></g>
 <use href="#fold" x="87" y="254.5"/>
 <!-- sketches -->
 <use href="#trD" x="40" y="279"/>
 <use href="#eye" x="62" y="285"/>
 <use href="#fold" x="87" y="278.5"/>
 <!-- sketch1/2 -->
 <use href="#eye" x="80" y="309"/>
 <use href="#sk" x="105" y="301"/>
 <use href="#eye" x="80" y="333"/>
 <use href="#sk" x="105" y="325"/>
</svg>


<!-- QAT RIGHT + NAV TOOLBAR + TIMELINE -->
<div class="a" style="left:521px;top:945px;width:237px;height:24px;background:#f2f2f2"></div>
<svg width="1280" height="1024" viewBox="0 0 1280 1024">
 <defs>
  <linearGradient id="av" x1="0" y1="0" x2="0" y2="1"><stop offset="0" stop-color="#8a9cb6"/><stop offset="1" stop-color="#b4c2d4"/></linearGradient>
  <linearGradient id="mg" x1="0" y1="0" x2="1" y2="1"><stop offset="0" stop-color="#fff"/><stop offset="1" stop-color="#9cc"/></linearGradient>
  <linearGradient id="gridg" x1="0" y1="0" x2="0" y2="1"><stop offset="0" stop-color="#777"/><stop offset="1" stop-color="#c4c8d4"/></linearGradient>
 </defs>
 <!-- sync -->
 <circle cx="1098" cy="46.8" r="7.9" fill="#666"/>
 <circle cx="1097.7" cy="47.1" r="5.2" fill="#cccccc"/>
 <g transform="rotate(45 1098 46.8)">
  <rect x="1095.6" y="39.3" width="1.5" height="5" fill="#ccc"/><rect x="1098.9" y="39.3" width="1.5" height="5" fill="#ccc"/>
  <rect x="1097.1" y="41.5" width="1.8" height="3.5" fill="#666"/>
  <rect x="1093.6" y="42.5" width="2" height="2.2" fill="#666"/><rect x="1100.4" y="42.5" width="2" height="2.2" fill="#666"/>
  <rect x="1097.3" y="51.5" width="1.4" height="4.5" fill="#ccc"/>
 </g>
 <!-- clock -->
 <circle cx="1130.9" cy="46.7" r="7.4" fill="none" stroke="#666" stroke-width="1"/>
 <circle cx="1130.9" cy="46.7" r="6" fill="#666"/>
 <path d="M1130.5 42v5.5h4" stroke="#ccc" stroke-width="1.2" fill="none"/>
 <!-- bell -->
 <path d="M1179.5 39.5c-1 0-1.5 1-1.5 2-2.5 1-3.5 3.5-3.5 6.5v3.5l-1.8 2h13.8l-1.8-2v-3.5c0-3-1-5.5-3.5-6.5 0-1-.5-2-1.5-2z" fill="#666"/>
 <path d="M1177.5 54.5h4l-2 1.5z" fill="#666"/>
 <circle cx="1184.2" cy="42.8" r="3.2" fill="#0696d7" stroke="#ccc" stroke-width=".6"/>
 <!-- help -->
 <circle cx="1213" cy="47" r="8" fill="#666"/>
 <path d="M1210 45c0-2 1.3-3 3-3s3 1 3 2.6c0 2.2-3 2.2-3 4.4" stroke="#fff" stroke-width="1.8" fill="none"/>
 <rect x="1212" y="50.5" width="2" height="2" fill="#fff"/>
 <!-- avatar -->
 <circle cx="1254" cy="47" r="12" fill="url(#av)"/>
 <path d="M1248 41c0-4 2.5-6 6-6s6 2 6 6c0 3-1 5.5-2.5 7l.5 2.5c3 1 6 2.5 7 5a12 12 0 0 1-22 0c1-2.5 4-4 7-5l.5-2.5c-1.5-1.5-2.5-4-2.5-7z" fill="#56647a"/>

 <!-- nav toolbar icons -->
 <g fill="#333">
  <path d="M545 955h6.5l-3.25 4z"/><path d="M656 955h6.5l-3.25 4z"/><path d="M686 955h6.5l-3.25 4z"/><path d="M717 955h6.5l-3.25 4z"/><path d="M748 955h6.5l-3.25 4z"/>
 </g>
 <!-- orbit -->
 <path d="M531.5 964.5v-12h-2.5l4-3.5 4 3.5h-2.5v12z" fill="#fff" stroke="#333" stroke-width=".9" stroke-linejoin="round"/>
 <path d="M527 960c-2-1-2-3 1-4 3-1 8-1 11 0s2.5 3.5-1 4.5" fill="none" stroke="#222" stroke-width="1.1"/>
 <path d="M527 960.5l3.5-2v4z" fill="#222"/>
 <!-- look at -->
 <rect x="557.5" y="954.5" width="15" height="10" rx="1" fill="#fafafa" stroke="#444" stroke-width="1.1"/>
 <rect x="560" y="957.5" width="10" height="4" fill="#b8bcc8" stroke="#555" stroke-width=".8"/>
 <path d="M558.5 954.5l3-5 2.5 2.5 4.5-2 3 1-.5 3.5" fill="#ddd" stroke="#444" stroke-width=".9"/>
 <!-- pan -->
 <g fill="#f0f0f0" stroke="#333" stroke-width=".9">
  <rect x="586.3" y="951" width="2.4" height="9" rx="1.2"/>
  <rect x="588.8" y="948.8" width="2.4" height="10" rx="1.2"/>
  <rect x="591.3" y="949.3" width="2.4" height="10" rx="1.2"/>
  <rect x="593.8" y="951.5" width="2.4" height="9" rx="1.2"/>
  <path d="M586.3 957.5l-1.5-1.5c-.8-.8-2-.2-1.5.8 1 2 2.5 4.5 4.5 7.5h5.5c2-1.5 2.9-3.5 2.9-6v-2.5h-9.9z" stroke-linejoin="round"/>
 </g>
 <path d="M587 957.2h8.5" stroke="#f0f0f0" stroke-width="1.6"/>
 <!-- zoom -->
 <circle cx="614" cy="956" r="4.6" fill="url(#mg)" stroke="#333" stroke-width="1.3"/>
 <path d="M617.5 959.5l4 4" stroke="#333" stroke-width="2.4" stroke-linecap="round"/>
 <path d="M622.5 950v4.5M620.2 952.2h4.6M620.2 955.5h4.6" stroke="#333" stroke-width=".9"/>
 <!-- fit -->
 <rect x="635.5" y="949.5" width="15" height="15" fill="none" stroke="#333" stroke-width=".8" stroke-dasharray="2 2"/>
 <circle cx="641.5" cy="955.5" r="5.5" fill="url(#mg)" stroke="#222" stroke-width="1.3"/>
 <path d="M645.5 959.5l4 4" stroke="#333" stroke-width="2.4" stroke-linecap="round"/>
 <!-- display -->
 <rect x="668.5" y="949.5" width="15" height="12" rx="1" fill="#e8e8e8" stroke="#333" stroke-width="1"/>
 <rect x="670.5" y="951.5" width="11" height="8" rx="1" fill="#a8c4e8" stroke="#2a4a80" stroke-width="1"/>
 <path d="M673.5 962v2h5v-2" fill="#eee" stroke="#333" stroke-width=".8"/>
 <!-- grid -->
 <rect x="699.5" y="949.5" width="15.5" height="15.5" rx="1.5" fill="url(#gridg)" stroke="#555" stroke-width="1"/>
 <g fill="#fff"><rect x="701" y="951" width="2" height="2"/><rect x="701" y="954" width="2" height="2"/><rect x="701" y="957" width="2" height="2"/><rect x="701" y="960" width="2" height="2"/><rect x="701" y="963" width="2" height="2"/><rect x="704" y="951" width="2" height="2"/><rect x="704" y="954" width="2" height="2"/><rect x="704" y="957" width="2" height="2"/><rect x="704" y="960" width="2" height="2"/><rect x="704" y="963" width="2" height="2"/><rect x="707" y="951" width="2" height="2"/><rect x="707" y="954" width="2" height="2"/><rect x="707" y="957" width="2" height="2"/><rect x="707" y="960" width="2" height="2"/><rect x="707" y="963" width="2" height="2"/><rect x="710" y="951" width="2" height="2"/><rect x="710" y="954" width="2" height="2"/><rect x="710" y="957" width="2" height="2"/><rect x="710" y="960" width="2" height="2"/><rect x="710" y="963" width="2" height="2"/><rect x="713" y="951" width="2" height="2"/><rect x="713" y="954" width="2" height="2"/><rect x="713" y="957" width="2" height="2"/><rect x="713" y="960" width="2" height="2"/><rect x="713" y="963" width="2" height="2"/></g>
 <!-- viewports -->
 <rect x="730.5" y="950.5" width="15" height="13" rx="1.5" fill="#fff" stroke="#2a4a80" stroke-width="1"/>
 <rect x="731.5" y="951.5" width="6" height="5" fill="#a8c4e8" stroke="#2a4a80" stroke-width=".6"/><rect x="738.5" y="951.5" width="6" height="5" fill="#a8c4e8" stroke="#2a4a80" stroke-width=".6"/>
 <rect x="731.5" y="957.5" width="6" height="5" fill="#a8c4e8" stroke="#2a4a80" stroke-width=".6"/><rect x="738.5" y="957.5" width="6" height="5" fill="#a8c4e8" stroke="#2a4a80" stroke-width=".6"/>
 <g fill="#7fa0d0"><rect x="733" y="953" width="3" height="2"/><rect x="740" y="953" width="3" height="2"/><rect x="733" y="959" width="3" height="2"/><rect x="740" y="959" width="3" height="2"/></g>

 <!-- timeline -->
 <g fill="#444">
  <rect x="12" y="992" width="2.5" height="14.5"/><path d="M24 991.5v15l-9-7.5z"/>
  <path d="M45.5 991.5v15l-9-7.5z"/><rect x="47" y="996" width="2" height="6"/>
  <path d="M62 991v16l11.5-8z"/>
  <rect x="86" y="996" width="2" height="6"/><path d="M89.5 991.5v15l9-7.5z"/>
  <path d="M112 991.5v15l9-7.5z"/><rect x="122.5" y="992" width="2.5" height="14.5"/>
  <path d="M185 984h12v4l-5 4.5h-2l-5-4.5z"/><rect x="190" y="990" width="2.2" height="26"/>
 </g>
 <g>
  <path d="M149.5 991h10M148 993v9.5M149.5 1004h6M160.5 993v4" stroke="#555" stroke-width="1" fill="none"/>
  <rect x="147" y="990" width="2" height="2" fill="#1a8ee6"/><rect x="160" y="990" width="2" height="2" fill="#1a8ee6"/><rect x="147" y="1003.5" width="2" height="2" fill="#1a8ee6"/>
  <path d="M155.5 1003.5l5-5 2 2-5 5h-2z" fill="#f0b040"/><path d="M160.5 998.5l1.2-1.2 2 2-1.2 1.2z" fill="#e33"/>
  <path d="M173.5 991h10M172 993v9.5M173.5 1004h6M184.5 993v4" stroke="#555" stroke-width="1" fill="none"/>
  <rect x="171" y="990" width="2" height="2" fill="#1a8ee6"/><rect x="184" y="990" width="2" height="2" fill="#1a8ee6"/><rect x="171" y="1003.5" width="2" height="2" fill="#1a8ee6"/>
  <path d="M179.5 1003.5l5-5 2 2-5 5h-2z" fill="#f0b040"/><path d="M184.5 998.5l1.2-1.2 2 2-1.2 1.2z" fill="#e33"/>
  <path d="M156 1009v5.5h23.5v-5.5" fill="none" stroke="#c4c4c4" stroke-width="1.6"/>
 </g>
 <!-- bottom right gear -->
 <g transform="translate(1258 999)" fill="#999">
  <circle r="5.6"/>
  <path d="M-1.7 -8h3.4v3h-3.4zM-1.7 5h3.4v3h-3.4zM-8 -1.7h3v3.4h-3zM5 -1.7h3v3.4h-3z"/>
  <path d="M-1.7 -8h3.4v3h-3.4zM-1.7 5h3.4v3h-3.4zM-8 -1.7h3v3.4h-3zM5 -1.7h3v3.4h-3z" transform="rotate(45)"/>
  <circle r="2.4" fill="#f2f2f2"/>
 </g>
 <!-- A badge -->
 <path d="M1258 949.5a7.5 7.5 0 1 0 0 15h7.5v-7.5a7.5 7.5 0 0 0-7.5-7.5z" fill="#333" stroke="#f0f0f0" stroke-width=".8"/>
 <path d="M1254.5 960.5l3.5-8 3.5 8M1255.5 958.5h4" stroke="#fff" stroke-width="1.6" fill="none"/>
</svg>

<!-- window borders -->
<div class="a" style="left:0;top:0;width:1px;height:663px;background:#6b6b6b"></div>
<div class="a" style="left:0;top:663px;width:1px;height:361px;background:#4a4a4a"></div>
<div class="a" style="left:1279px;top:0;width:1px;height:1024px;background:#222"></div>
<div class="a" style="left:0;top:0;width:1280px;height:1px;background:#555"></div>
<div class="a" style="left:0;top:1023px;width:1280px;height:1px;background:#555"></div>
</body></html>
